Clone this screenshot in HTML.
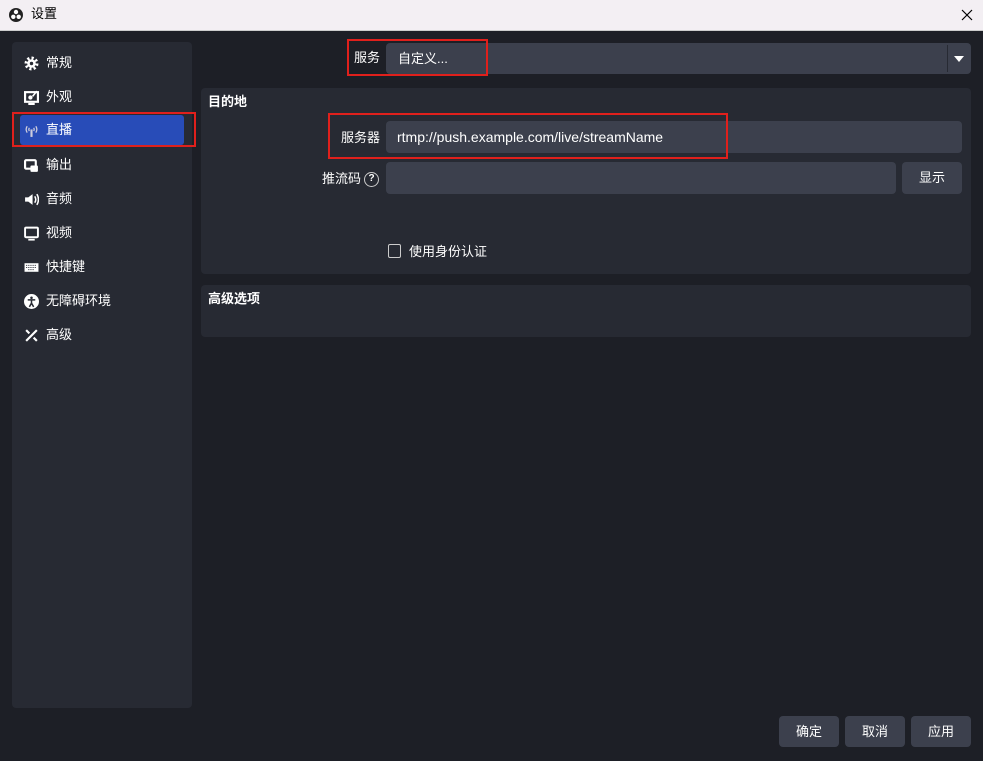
<!DOCTYPE html>
<html><head><meta charset="utf-8"><style>
*{box-sizing:border-box;margin:0;padding:0}
body{width:983px;height:761px;overflow:hidden;background:#1d1f26;font-family:"Liberation Sans","Noto Sans CJK SC",sans-serif;font-size:13px;color:#fff;position:relative;line-height:1.2}
.abs{position:absolute}
.title{left:0;top:0;width:983px;height:31px;background:#f3eff3;color:#000;border-bottom:1px solid #ccc}
.side{left:12px;top:42px;width:180px;height:666px;background:#272a33;border-radius:4px}
.item{position:absolute;left:4px;width:168px;height:30px;display:flex;align-items:center;font-size:13px}
.item svg{margin:0 7px 0 8px;flex-shrink:0;width:15px;height:15px}
.sel{background:#284cb8;border-radius:3px}
.panel{background:#272a33;border-radius:4px}
.inp{background:#3c404d;border-radius:4px}
.red{border:2px solid #e0201c}
.btn{background:#3c404d;border-radius:4px;display:flex;align-items:center;justify-content:center;font-size:13px}
.lab{font-size:13px}
</style></head><body>
<div class="abs title">
<svg class="abs" style="left:9px;top:8px" width="14" height="14" viewBox="0 0 14 14"><circle cx="7" cy="7" r="7" fill="#222"/><circle cx="7" cy="4" r="2.2" fill="#fff"/><circle cx="4.3" cy="8.8" r="2.2" fill="#fff"/><circle cx="9.7" cy="8.8" r="2.2" fill="#fff"/></svg>
<div class="abs" style="left:31px;top:6px;font-size:13px">设置</div>
<svg class="abs" style="left:961px;top:9px" width="12" height="12" viewBox="0 0 12 12"><path d="M1 1L11 11M11 1L1 11" stroke="#000" stroke-width="1.2"/></svg>
</div>
<div class="abs side">
<div class="item" style="top:6px"><svg viewBox="0 0 14 14"><circle cx="7" cy="7" r="5" fill="none" stroke="#fff" stroke-width="3" stroke-dasharray="2 1.9"/><circle cx="7" cy="7" r="4" fill="#fff"/><circle cx="7" cy="7" r="1.6" fill="#272a33"/></svg>常规</div>
<div class="item" style="top:40px"><svg viewBox="0 0 14 14"><rect x="1" y="2" width="12" height="9" fill="none" stroke="#fff" stroke-width="2"/><rect x="4" y="12" width="6" height="2" fill="#fff"/><circle cx="6" cy="7" r="2" fill="#fff"/><path d="M8 6l4-5" stroke="#fff" stroke-width="1.5"/></svg>外观</div>
<div class="item sel" style="top:73px;left:8px;width:164px"><svg viewBox="0 0 14 14" fill="none" stroke="#ccd" stroke-width="1.2" style="margin-left:4px"><path d="M3 3Q1 6 3 9M11 3Q13 6 11 9M5 4.5Q4 6 5 7.5M9 4.5Q10 6 9 7.5"/><path d="M7 6V13" stroke-width="2"/></svg>直播</div>
<div class="item" style="top:108px"><svg viewBox="0 0 14 14"><rect x="1" y="2" width="10" height="8" rx="1" fill="none" stroke="#fff" stroke-width="2"/><rect x="6" y="7" width="7" height="6" rx="1" fill="#fff"/></svg>输出</div>
<div class="item" style="top:142px"><svg viewBox="0 0 14 14"><path d="M1 5h3l4-3v10l-4-3H1z" fill="#fff"/><path d="M10 4q2 3 0 6M12 2q3 5 0 10" stroke="#fff" stroke-width="1.4" fill="none"/></svg>音频</div>
<div class="item" style="top:176px"><svg viewBox="0 0 14 14"><rect x="1" y="1.5" width="12" height="9" rx="1" fill="none" stroke="#fff" stroke-width="1.8"/><rect x="4" y="12" width="6" height="1.6" fill="#fff"/></svg>视频</div>
<div class="item" style="top:210px"><svg viewBox="0 0 14 14"><rect x="0.5" y="3" width="13" height="8" fill="#fff"/><path d="M2 5h10M2 7h10M4 9h6" stroke="#272a33" stroke-width="0.9" stroke-dasharray="1 1"/></svg>快捷键</div>
<div class="item" style="top:244px"><svg viewBox="0 0 14 14"><circle cx="7" cy="7" r="7" fill="#fff"/><circle cx="7" cy="3.5" r="1.2" fill="#272a33"/><path d="M3.5 5.5h7M7 5.5v3M7 8.5l-2 3.5M7 8.5l2 3.5" stroke="#272a33" stroke-width="1.4"/></svg>无障碍环境</div>
<div class="item" style="top:278px"><svg viewBox="0 0 14 14" stroke="#fff" stroke-width="2"><path d="M2 12L12 2M2 2l3 3M9 9l3 3"/></svg>高级</div>
</div>
<div class="abs red" style="left:12px;top:112px;width:184px;height:35px"></div>

<div class="abs lab" style="left:354px;top:50px">服务</div>
<div class="abs inp" style="left:386px;top:43px;width:585px;height:31px"></div>
<div class="abs" style="left:947px;top:45px;width:1px;height:27px;background:#272a33"></div>
<div class="abs" style="left:954px;top:56px;width:0;height:0;border-left:5px solid transparent;border-right:5px solid transparent;border-top:6px solid #fff"></div>
<div class="abs" style="left:398px;top:51px">自定义...</div>
<div class="abs red" style="left:347px;top:39px;width:141px;height:37px"></div>

<div class="abs panel" style="left:201px;top:88px;width:770px;height:186px"></div>
<div class="abs" style="left:208px;top:94px;font-weight:bold">目的地</div>
<div class="abs lab" style="left:341px;top:130px">服务器</div>
<div class="abs inp" style="left:386px;top:121px;width:576px;height:32px"></div>
<div class="abs" style="left:397px;top:129px;font-size:14px">rtmp://push.example.com/live/streamName</div>
<div class="abs red" style="left:328px;top:113px;width:400px;height:46px"></div>
<div class="abs lab" style="left:322px;top:171px">推流码</div>
<div class="abs" style="left:364px;top:172px;width:15px;height:15px;border:1.5px solid #ccc;border-radius:50%;font-size:10px;text-align:center;line-height:12px;font-weight:bold">?</div>
<div class="abs inp" style="left:386px;top:162px;width:510px;height:32px"></div>
<div class="abs btn" style="left:902px;top:162px;width:60px;height:32px">显示</div>
<div class="abs" style="left:388px;top:244px;width:13px;height:14px;border:1.3px solid #ccc;border-radius:2px"></div>
<div class="abs lab" style="left:409px;top:244px">使用身份认证</div>

<div class="abs panel" style="left:201px;top:285px;width:770px;height:52px"></div>
<div class="abs" style="left:208px;top:291px;font-weight:bold">高级选项</div>

<div class="abs btn" style="left:779px;top:716px;width:60px;height:31px">确定</div>
<div class="abs btn" style="left:845px;top:716px;width:60px;height:31px">取消</div>
<div class="abs btn" style="left:911px;top:716px;width:60px;height:31px">应用</div>
</body></html>
